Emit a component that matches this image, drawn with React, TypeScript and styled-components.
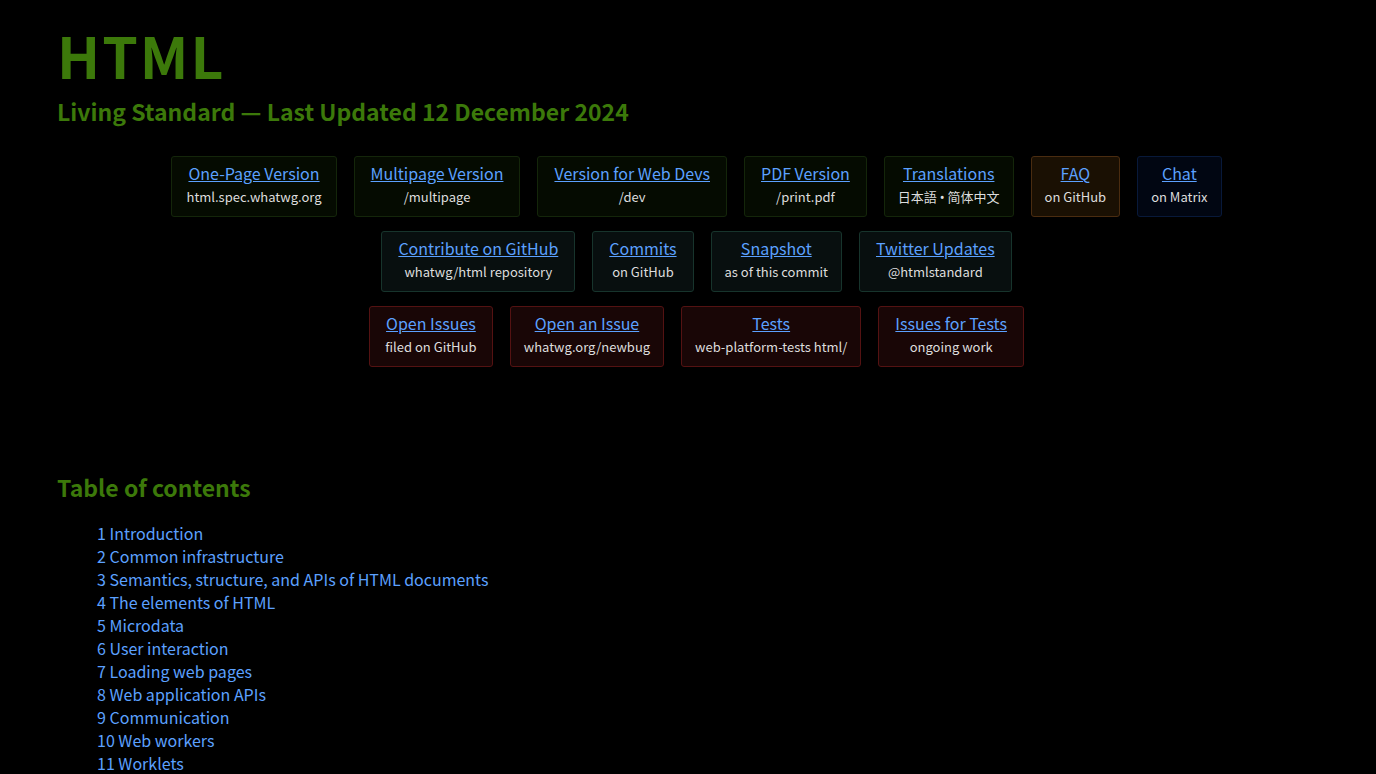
import React from "react";
import styled, { createGlobalStyle } from "styled-components";

const tones = {
  green: { background: "#050b01", border: "#14260a" },
  orange: { background: "#1a1003", border: "#4a2c10" },
  blue: { background: "#010612", border: "#08193a" },
  teal: { background: "#080f0f", border: "#17342c" },
  red: { background: "#190606", border: "#541212" },
};

type Tone = keyof typeof tones;

const GlobalStyle = createGlobalStyle`
  html { background: #000; }
  body {
    margin: 0;
    background: #000;
    font-family: "Noto Sans CJK SC", "Noto Sans", sans-serif;
    color: #ddd;
  }
`;

const Page = styled.div`
  padding: 14px 40px 0 57px;
`;

const Title = styled.h1`
  margin: 0;
  color: #3c790a;
  font-size: 57px;
  line-height: 80px;
  letter-spacing: 2px;
  font-weight: 700;
`;

const Subtitle = styled.p`
  margin: 0 0 28px;
  color: #3c790a;
  font-size: 23px;
  line-height: 34px;
  font-weight: 700;
`;

const LinkGrid = styled.nav`
  display: flex;
  flex-direction: column;
  gap: 14px;
`;

const LinkRow = styled.ul`
  display: flex;
  flex-wrap: wrap;
  justify-content: center;
  gap: 14px 17px;
  margin: 0;
  padding: 0;
  list-style: none;
`;

const Card = styled.li<{ $tone: Tone }>`
  padding: 5px 13px 8px;
  border: 1px solid ${(p) => tones[p.$tone].border};
  border-radius: 3px;
  background: ${(p) => tones[p.$tone].background};
  text-align: center;
`;

const CardLink = styled.a`
  display: block;
  padding: 0 3px;
  color: #5ca1ff;
  font-size: 16px;
  line-height: 23px;
`;

const CardNote = styled.span`
  display: block;
  font-size: 13px;
  line-height: 23px;
`;

const Bullet = styled.span`
  font-family: "Noto Sans", sans-serif;
  line-height: 1;
`;

const ContentsTitle = styled.h2`
  margin: 103px 0 18px;
  color: #3c790a;
  font-size: 23px;
  line-height: 34px;
  font-weight: 700;
`;

const Contents = styled.ol`
  margin: 0;
  padding: 0 0 0 40px;
  list-style: none;
  font-size: 16px;
  line-height: 23px;
`;

const ContentsLink = styled.a`
  color: #5ca1ff;
  text-decoration: none;
`;

const rows: [string, React.ReactNode, Tone][][] = [
  [
    ["One-Page Version", "html.spec.whatwg.org", "green"],
    ["Multipage Version", "/multipage", "green"],
    ["Version for Web Devs", "/dev", "green"],
    ["PDF Version", "/print.pdf", "green"],
    ["Translations", <>日本語 <Bullet>•</Bullet> 简体中文</>, "green"],
    ["FAQ", "on GitHub", "orange"],
    ["Chat", "on Matrix", "blue"],
  ],
  [
    ["Contribute on GitHub", "whatwg/html repository", "teal"],
    ["Commits", "on GitHub", "teal"],
    ["Snapshot", "as of this commit", "teal"],
    ["Twitter Updates", "@htmlstandard", "teal"],
  ],
  [
    ["Open Issues", "filed on GitHub", "red"],
    ["Open an Issue", "whatwg.org/newbug", "red"],
    ["Tests", "web-platform-tests html/", "red"],
    ["Issues for Tests", "ongoing work", "red"],
  ],
];

const chapters = [
  "Introduction",
  "Common infrastructure",
  "Semantics, structure, and APIs of HTML documents",
  "The elements of HTML",
  "Microdata",
  "User interaction",
  "Loading web pages",
  "Web application APIs",
  "Communication",
  "Web workers",
  "Worklets",
];

export default function App() {
  return (
    <>
      <GlobalStyle />
      <Page>
        <header>
          <Title>HTML</Title>
          <Subtitle>Living Standard — Last Updated 12 December 2024</Subtitle>
        </header>
        <LinkGrid aria-label="Versions and resources">
          {rows.map((row, i) => (
            <LinkRow key={i}>
              {row.map(([label, note, tone]) => (
                <Card key={label} $tone={tone}>
                  <CardLink href="#contents">{label}</CardLink>
                  <CardNote>{note}</CardNote>
                </Card>
              ))}
            </LinkRow>
          ))}
        </LinkGrid>
        <ContentsTitle id="contents">Table of contents</ContentsTitle>
        <Contents>
          {chapters.map((name, i) => (
            <li key={name}>
              <ContentsLink href={`#chapter-${i + 1}`}>
                {i + 1} {name}
              </ContentsLink>
            </li>
          ))}
        </Contents>
      </Page>
    </>
  );
}
